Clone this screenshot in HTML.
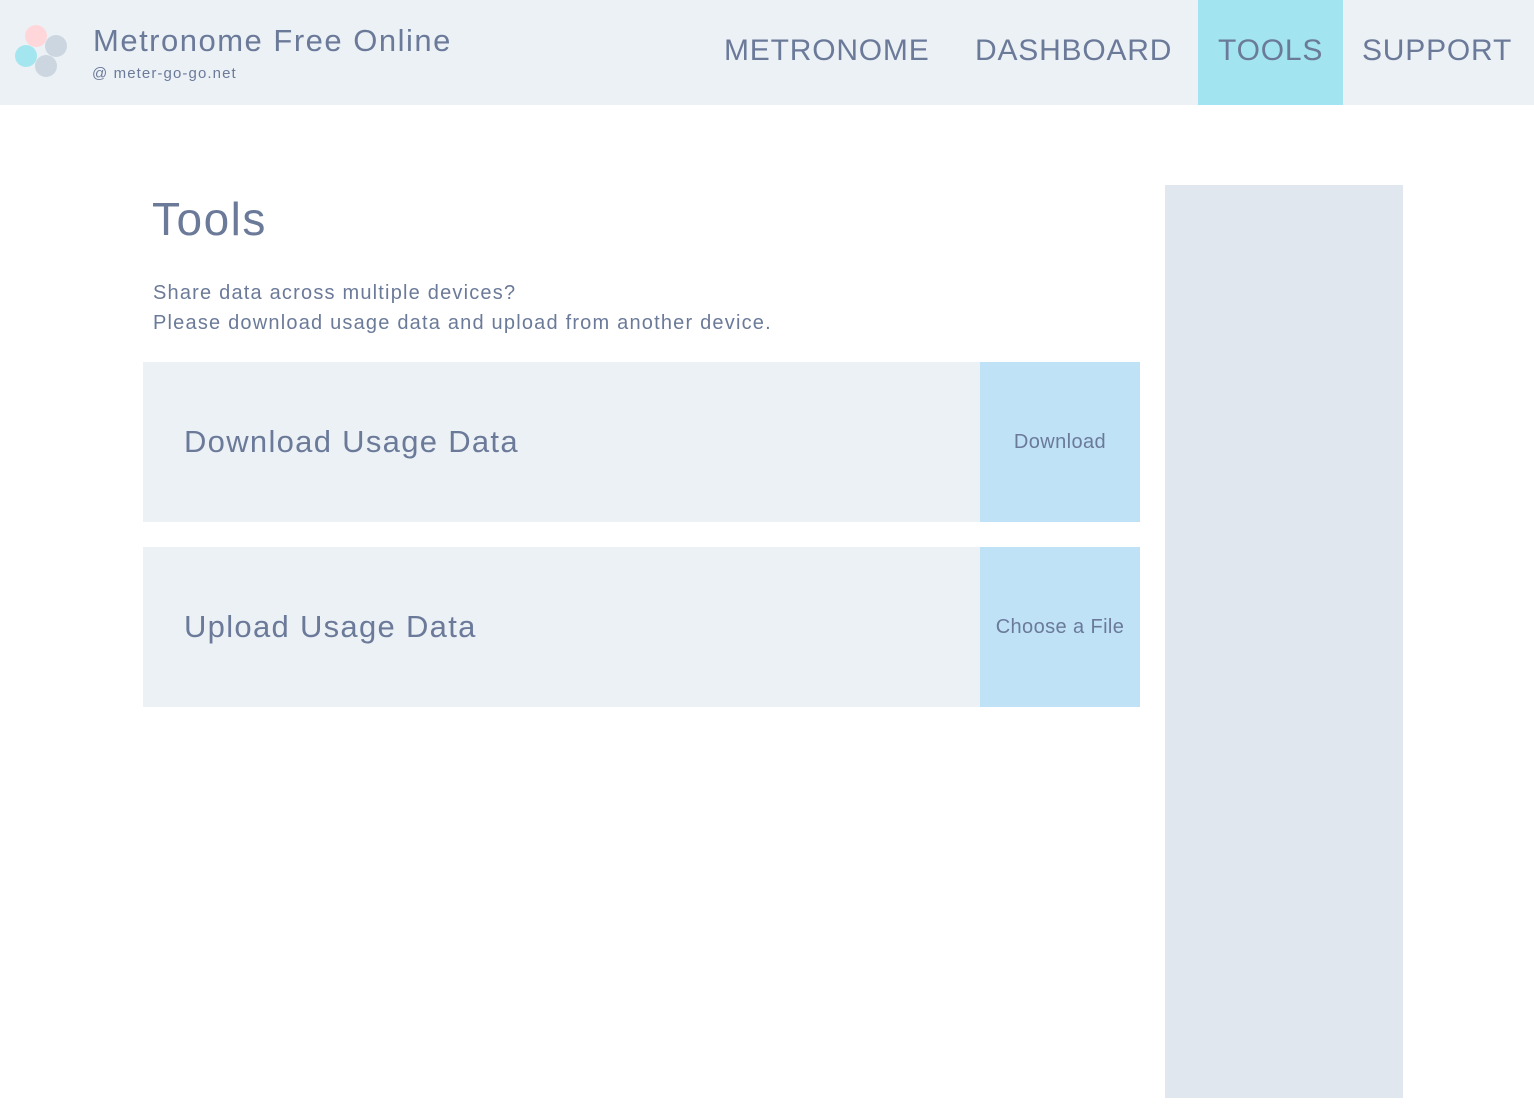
<!DOCTYPE html>
<html><head><meta charset="utf-8"><style>
*{margin:0;padding:0;box-sizing:border-box}
body{width:1534px;height:1119px;background:#fff;font-family:"Liberation Sans",sans-serif;color:#6b7a99;position:relative;overflow:hidden}
.hdr{position:absolute;left:0;top:0;width:1534px;height:105px;background:#ecf1f6}
.c{position:absolute;width:22px;height:22px;border-radius:50%}
.a{position:absolute;white-space:nowrap}
.nav{position:absolute;top:33px;font-size:30px;letter-spacing:.8px;line-height:36px}
.box{position:absolute;left:143px;width:997px;height:160px;background:#ecf1f6}
.btn{position:absolute;right:0;top:0;width:160px;height:160px;background:#bfe2f7;display:flex;align-items:center;justify-content:center;font-size:20px;letter-spacing:.4px}
.bt{position:absolute;left:41px;top:62px;font-size:31px;letter-spacing:1.3px}
</style></head><body>
<div class="hdr">
<div class="c" style="left:25px;top:25px;background:#ffd7da"></div>
<div class="c" style="left:45px;top:35px;background:#ccd6e0"></div>
<div class="c" style="left:15px;top:45px;background:#a3e6ef"></div>
<div class="c" style="left:35px;top:55px;background:#ccd6e0"></div>
<div class="a" style="left:93px;top:23px;font-size:31px;letter-spacing:1.5px">Metronome Free Online</div>
<div class="a" style="left:92px;top:65px;font-size:15px;letter-spacing:1.1px">@ meter-go-go.net</div>
<div style="position:absolute;left:1198px;top:0;width:145px;height:105px;background:#a2e4ef"></div>
<div class="nav" style="left:724px">METRONOME</div>
<div class="nav" style="left:975px">DASHBOARD</div>
<div class="nav" style="left:1218px">TOOLS</div>
<div class="nav" style="left:1362px">SUPPORT</div>
</div>
<div style="position:absolute;left:1165px;top:185px;width:238px;height:913px;background:#e1e7ef"></div>
<div class="a" style="left:152px;top:192px;font-size:46px;letter-spacing:1.5px">Tools</div>
<div class="a" style="left:153px;top:278px;font-size:20px;line-height:30px;letter-spacing:1.2px">Share data across multiple devices?<br>Please download usage data and upload from another device.</div>
<div class="box" style="top:362px"><div class="bt">Download Usage Data</div><div class="btn">Download</div></div>
<div class="box" style="top:547px"><div class="bt">Upload Usage Data</div><div class="btn">Choose a File</div></div>
</body></html>
